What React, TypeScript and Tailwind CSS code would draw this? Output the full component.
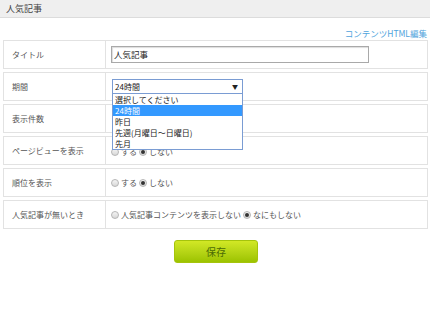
import React from "react";

const font = { fontFamily: '"Noto Sans CJK JP", "Liberation Sans", sans-serif' };

const Radio = ({ checked }: { checked?: boolean }) => (
  <span className="inline-flex items-center justify-center w-[8px] h-[8px] rounded-full border border-[#b5b5b5] bg-gradient-to-b from-[#f4f4f4] to-[#d8d8d8] mr-[2px]">
    {checked && <span className="w-[4px] h-[4px] rounded-full bg-[#333]" />}
  </span>
);

const Row = ({ label, children }: { label: string; children?: React.ReactNode }) => (
  <div className="flex h-[29px] mb-[3px] border border-[#e2e2e2] bg-white">
    <div className="w-[102px] shrink-0 flex items-center pl-[8px] border-r border-[#e2e2e2] text-[#555]">
      {label}
    </div>
    <div className="flex-1 flex items-center pl-[5px] relative">{children}</div>
  </div>
);

const options = ["選択してください", "24時間", "昨日", "先週(月曜日～日曜日)", "先月"];

export default function App() {
  return (
    <div className="w-[430px] h-[314px] bg-white text-[8px] text-[#333] overflow-hidden relative" style={font}>
      <div className="h-[18px] bg-[#efefef] border-b border-[#dcdcdc] flex items-center pl-[6px] text-[9px] text-[#444]">
        人気記事
      </div>
      <div className="flex justify-end pr-[3px] pt-[10px] pb-[2px] text-[#4ea3dc] text-[8.5px] leading-[10px]">
        コンテンツHTML編集
      </div>
      <div className="pl-[3px] pr-[2px]">
        <Row label="タイトル">
          <div className="w-[258px] h-[17px] border border-[#a9a9a9] shadow-[inset_1px_1px_1px_#ddd] flex items-center pl-[2px] text-[#222] text-[8.5px]">
            人気記事
          </div>
        </Row>
        <Row label="期間">
          <div className="ml-[1px] w-[131px] h-[15px] border border-[#7a9cd3] flex items-center justify-between pl-[2px] pr-[4px] text-[#222] relative">
            <span>24時間</span>
            <span className="text-[6px]">▼</span>
            <div className="absolute left-[-1px] top-[13px] w-[131px] border border-[#7a9cd3] bg-white z-10 flex flex-col">
              {options.map((o) => (
                <div
                  key={o}
                  className={
                    o === "24時間"
                      ? "h-[11px] leading-[11px] pl-[2px] bg-[#3399ff] text-white"
                      : "h-[11px] leading-[11px] pl-[2px] text-[#222]"
                  }
                >
                  {o}
                </div>
              ))}
            </div>
          </div>
        </Row>
        <Row label="表示件数">
          <div className="ml-[95px] w-[28px] h-[13px] border border-[#a9a9a9]" />
        </Row>
        <Row label="ページビューを表示">
          <div className="flex items-center mt-[3px] text-[#555]">
            <Radio />
            <span className="mr-[2px]">する</span>
            <Radio checked />
            <span>しない</span>
          </div>
        </Row>
        <Row label="順位を表示">
          <div className="flex items-center text-[#555]">
            <Radio />
            <span className="mr-[2px]">する</span>
            <Radio checked />
            <span>しない</span>
          </div>
        </Row>
        <Row label="人気記事が無いとき">
          <div className="flex items-center text-[#555]">
            <Radio />
            <span className="mr-[2px]">人気記事コンテンツを表示しない</span>
            <Radio checked />
            <span>なにもしない</span>
          </div>
        </Row>
      </div>
      <div className="flex justify-center pt-[8px] pl-[2px]">
        <button
          className="w-[84px] h-[23px] rounded-[3px] border border-[#a5c40c] bg-gradient-to-b from-[#d2e825] to-[#9cc300] text-[#4b6b05] text-[10px] flex items-center justify-center"
          style={font}
        >
          保存
        </button>
      </div>
    </div>
  );
}
